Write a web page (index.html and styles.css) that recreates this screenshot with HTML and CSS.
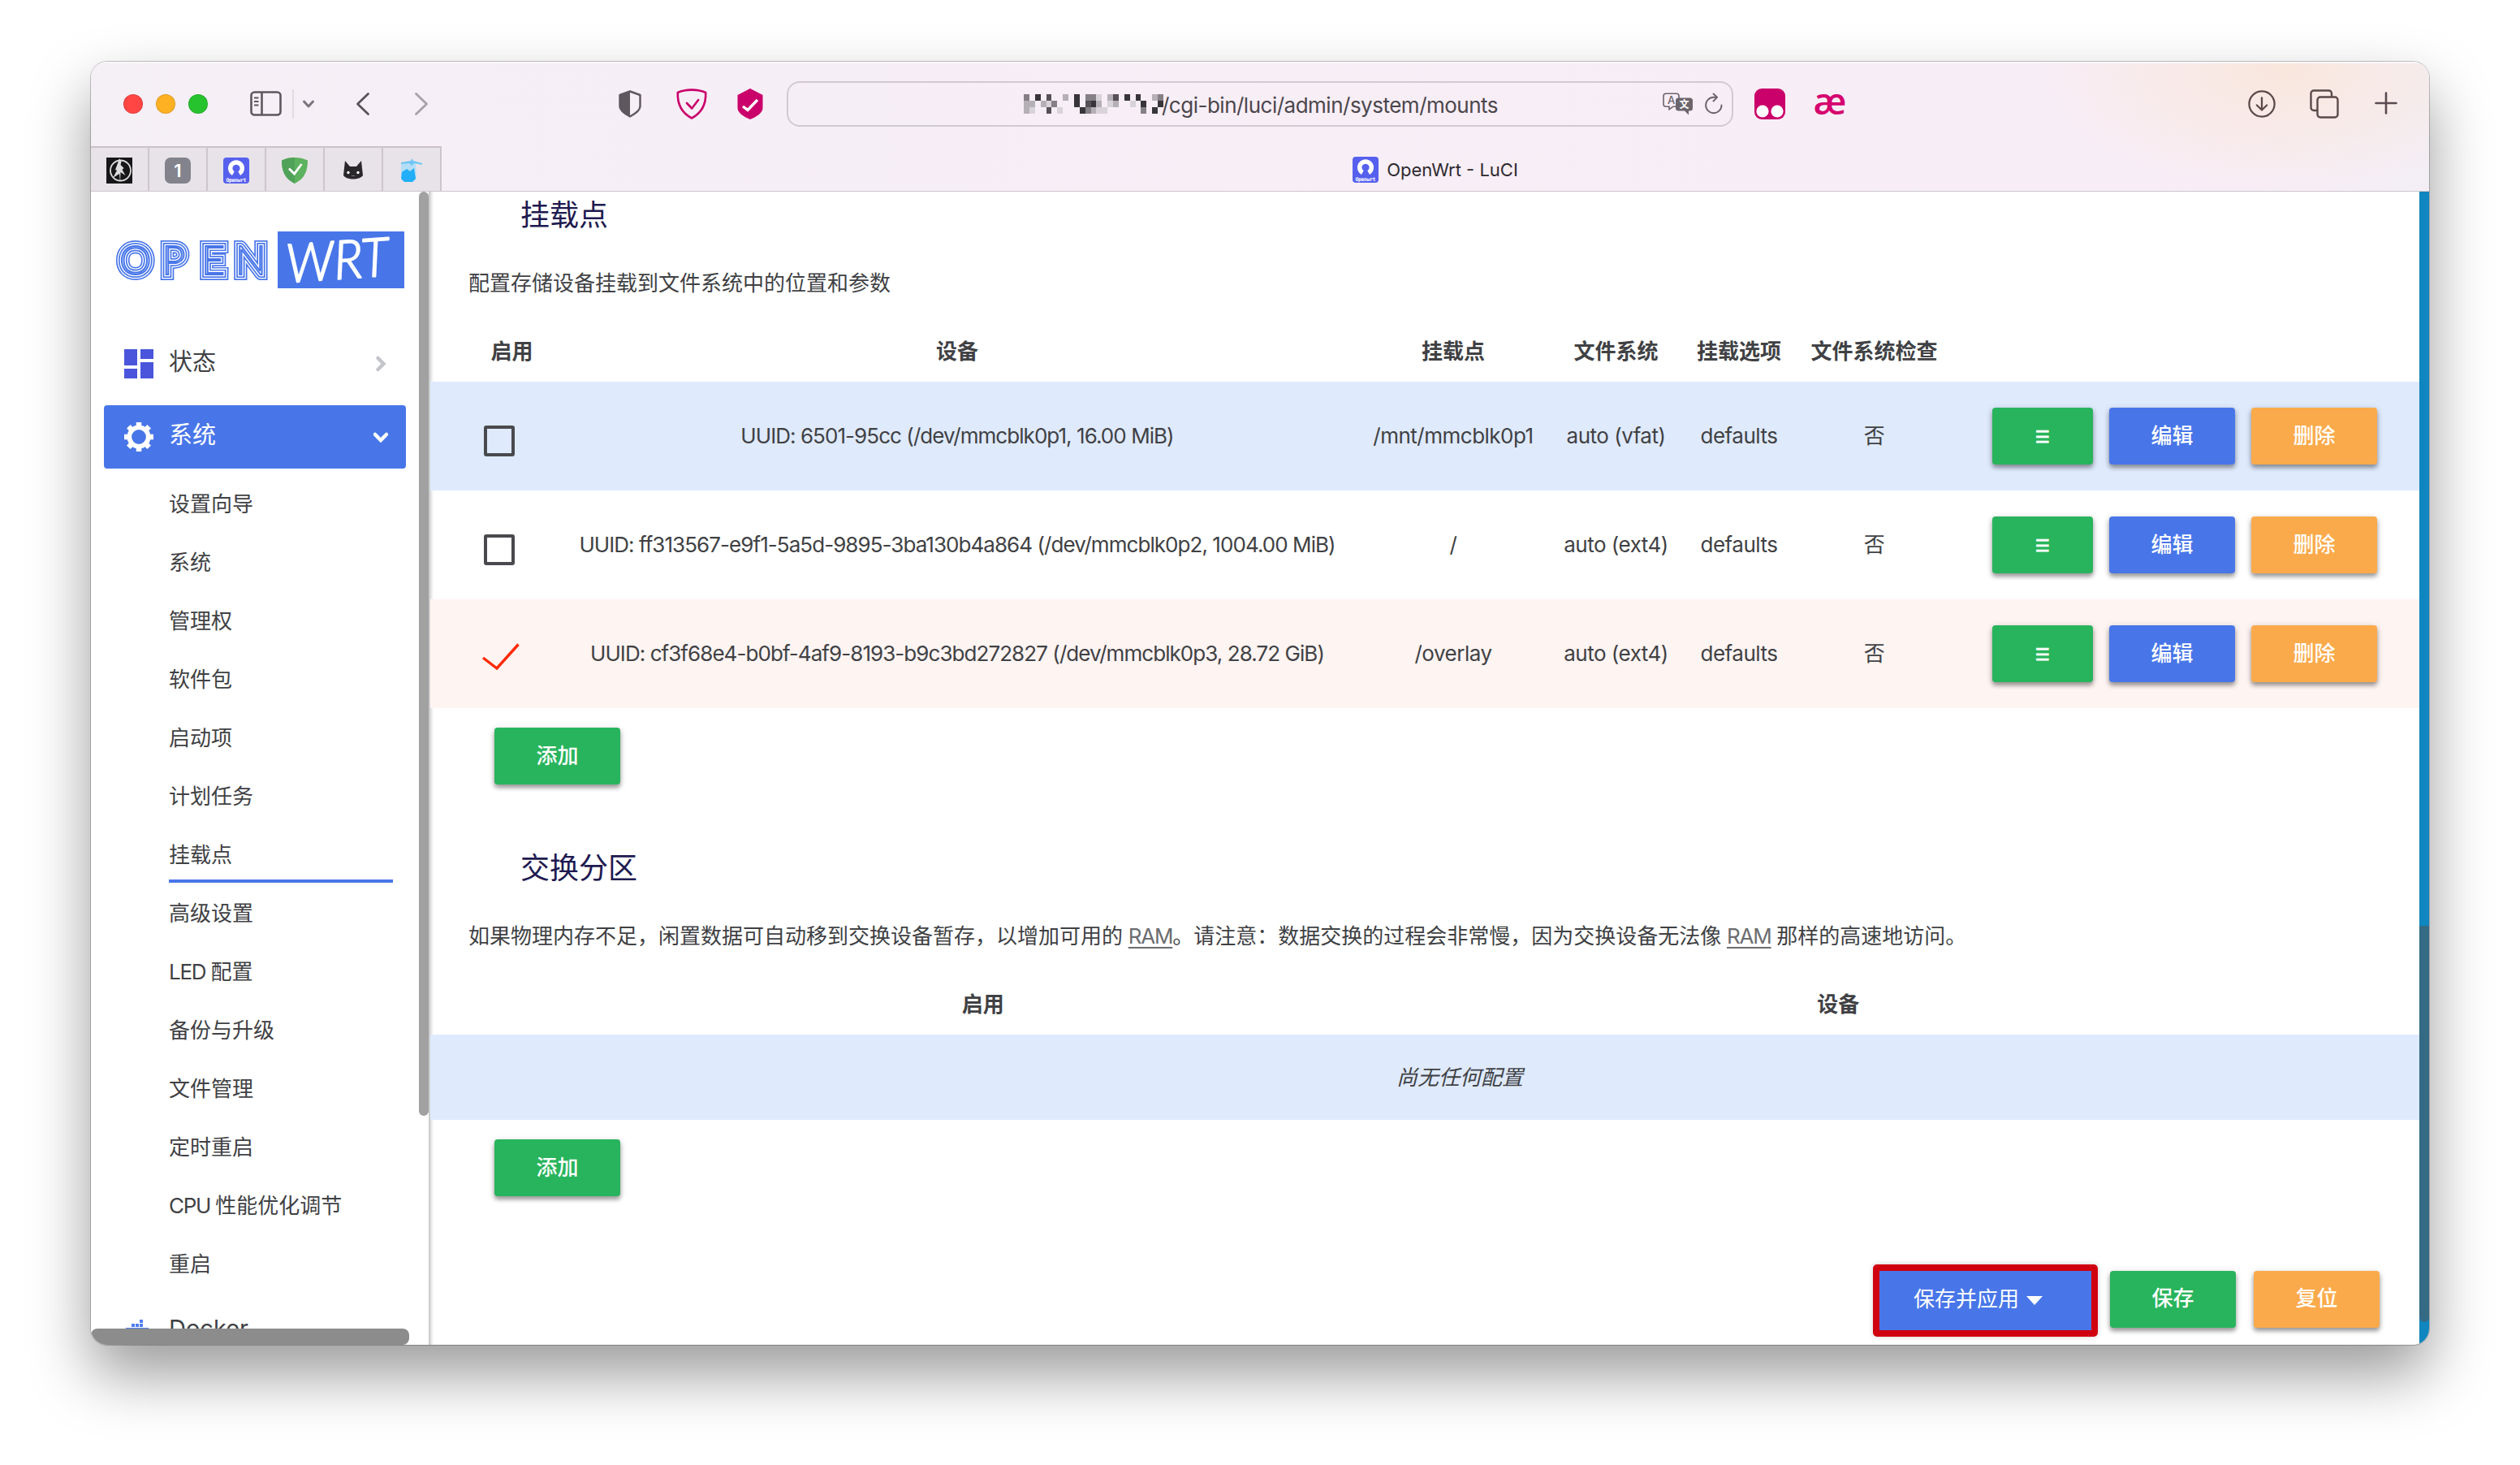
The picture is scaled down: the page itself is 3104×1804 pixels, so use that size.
FILE: index.html
```
<!DOCTYPE html>
<html lang="zh">
<head>
    <meta charset="UTF-8">
    <meta name="viewport" content="width=device-width, initial-scale=1.0">
    <title>OpenWrt - LuCI</title>
    <link rel="stylesheet" href="styles.css">
</head>
<body>

<div class="window">
    <header class="toolbar">
        <div class="titlebar">
            <div class="lights"><i class="red"></i><i class="yellow"></i><i class="green"></i></div>
            <svg class="i-sidebar" width="40" height="32" viewBox="0 0 40 32" fill="none" stroke="#5f575e" stroke-width="2.6">
                <rect x="1.5" y="1.5" width="36" height="28" rx="4"/><path d="M14.5 2v27"/><path d="M5 8.500h5.500M5 13h5.500M5 17.500h5.500" stroke-width="1.800"/>
            </svg>
            <span class="sep"></span>
            <svg class="i-down" width="16" height="12" viewBox="0 0 16 12" fill="none" stroke="#7c757b" stroke-width="3" stroke-linecap="round" stroke-linejoin="round"><path d="M2.500 3 8 9l5.500-6"/></svg>
            <svg class="i-back" width="18" height="30" viewBox="0 0 18 30" fill="none" stroke="#5a5259" stroke-width="2.800" stroke-linecap="round" stroke-linejoin="round"><path d="M15.500 2.500 2.500 15l13 12.500"/></svg>
            <svg class="i-forward" width="18" height="30" viewBox="0 0 18 30" fill="none" stroke="#a8a1a8" stroke-width="2.800" stroke-linecap="round" stroke-linejoin="round"><path d="M2.500 2.500 15.500 15l-13 12.500"/></svg>
            <svg class="i-privacy" width="28" height="34" viewBox="0 0 28 34">
                <path d="M14 1.500 26.500 6v14c0 5-6 9-12.500 12.500C7.500 29 1.500 25 1.500 20V6z" fill="none" stroke="#5f575e" stroke-width="2.400" stroke-linejoin="round"/>
                <path d="M14 1.500V32.500C7.500 29 1.500 25 1.500 20V6z" fill="#5f575e"/>
            </svg>
            <svg class="i-adguard" width="38" height="38" viewBox="0 0 38 38" fill="none" stroke="#ca006b" stroke-width="2.600" stroke-linecap="round" stroke-linejoin="round">
                <path d="M19 1.600C13 1.600 6 3 1.800 5c-.6 14 5 25 17.200 31.500C31.200 30 36.800 19 36.200 5 32 3 25 1.600 19 1.600z"/><path d="M13 18l6.200 6.500 8-10.500"/>
            </svg>
            <svg class="i-check" width="32" height="38" viewBox="0 0 32 38">
                <path d="M16 0 31.500 8v16c0 6-8 11-15.500 14C8.500 35 .5 30 .5 24V8z" fill="#ca006b"/><path d="M7 22l6 4.500L25 14" fill="none" stroke="#fff" stroke-width="3.400"/>
            </svg>
            <div class="address">
                <svg class="mosaic" width="172" height="24" viewBox="0 0 25 3" preserveAspectRatio="none" shape-rendering="crispEdges">
                    <path fill="#383539" d="M2 0h1v1h-1zM9 0h1v2h-1zM18 0h1v1h-1zM20 0h1v1h-1zM12 1h1v1h-1zM21 1h1v1h-1zM24 1h1v1h-1zM10 2h1v1h-1zM23 2h1v1h-1z"/>
                    <path fill="#555156" d="M4 0h1v1h-1zM16 0h1v1h-1zM11 1h1v1h-1zM4 2h1v1h-1z"/>
                    <path fill="#857f86" d="M0 0h1v1h-1zM5 1h1v1h-1zM11 0h2v1h-2zM11 2h1v1h-1zM21 2h1v1h-1zM24 0h1v1h-1z"/>
                    <path fill="#b5afb6" d="M0 1h1v2h-1zM1 1h1v1h-1zM3 1h1v1h-1zM7 0h1v1h-1zM13 1h1v1h-1zM15 0h1v1h-1zM16 1h1v1h-1zM12 2h1v1h-1zM23 0h1v1h-1z"/>
                    <path fill="#d8d2d9" d="M1 2h1v1h-1zM4 1h1v1h-1zM13 2h2v1h-2zM13 0h1v1h-1zM15 1h1v1h-1zM6 2h1v1h-1zM19 1h1v1h-1z"/>
                </svg>
                <span class="url">/cgi-bin/luci/admin/system/mounts</span>
                <svg class="i-translate" width="38" height="28" viewBox="0 0 38 28">
                    <path d="M4 1.200h13a3 3 0 0 1 3 3v10a3 3 0 0 1-3 3h-4l-5 3.500v-3.500H4a3 3 0 0 1-3-3v-10a3 3 0 0 1 3-3z" fill="none" stroke="#6b646b" stroke-width="1.600"/>
                    <text x="10.500" y="13.500" text-anchor="middle" class="tr-a">A</text>
                    <path d="M19.500 6.500h14a3.500 3.500 0 0 1 3.500 3.500v9a3.500 3.500 0 0 1-3.500 3.500H32v5l-5-5h-7.500A3.500 3.500 0 0 1 16 19v-9a3.500 3.500 0 0 1 3.500-3.500z" fill="#6b646b"/>
                    <text x="26.500" y="19" text-anchor="middle" class="tr-b">文</text>
                </svg>
                <svg class="i-reload" width="24" height="28" viewBox="0 0 24 28" fill="none" stroke="#6b646b" stroke-width="1.900" stroke-linecap="round" stroke-linejoin="round">
                    <path d="M21.500 15.500a9.700 9.700 0 1 1-9.700-9.700h3.700"/><path d="M11.500 1.500 16 5.800l-4.500 4.700"/>
                </svg>
            </div>
            <svg class="i-monkey" width="38" height="38" viewBox="0 0 38 38"><rect width="38" height="38" rx="9" fill="#ca006b"/><circle cx="10" cy="28" r="7.600" fill="#fff"/><circle cx="28" cy="28" r="7.600" fill="#fff"/></svg>
            <span class="ae">æ</span>
            <svg class="i-download" width="34" height="34" viewBox="0 0 34 34" fill="none" stroke="#5b4a49" stroke-width="2.300" stroke-linecap="round" stroke-linejoin="round"><circle cx="17" cy="17" r="15.600"/><path d="M17 9.500v15M10.800 18.500l6.200 6 6.200-6"/></svg>
            <svg class="i-tabs" width="36" height="36" viewBox="0 0 36 36" fill="none" stroke="#5b4a49" stroke-width="2.400"><path d="M9.500 26H5a3.500 3.500 0 0 1-3.500-3.500V5A3.500 3.500 0 0 1 5 1.500h18.500A3.500 3.500 0 0 1 27 5v4"/><rect x="9.500" y="9.500" width="25" height="25" rx="3.500"/></svg>
            <svg class="i-plus" width="28" height="28" viewBox="0 0 28 28" stroke="#5b4a51" stroke-width="2.600" stroke-linecap="round"><path d="M14 1.500v25M1.500 14h25"/></svg>
        </div>
        <div class="tabs">
            <div class="pin">
                <svg width="32" height="32" viewBox="0 0 32 32"><rect width="32" height="32" fill="#17171a"/><circle cx="17.500" cy="16" r="12.500" fill="none" stroke="#ddd" stroke-width="1.800"/><path d="M16 1l2.500 4-1 4 4 4-2 2 4 7-6-4-.5 13-1-11-8 5 5-9-2-1 3-8z" fill="#ddd"/></svg>
            </div>
            <div class="pin"><span class="one">1</span></div>
            <div class="pin">
                <svg width="32" height="32" viewBox="0 0 32 32"><rect width="32" height="32" rx="4" fill="#5560ee"/><path d="M12.300 19.600a7.300 7.300 0 1 1 7.400 0" fill="none" stroke="#fff" stroke-width="5.400"/><text x="16" y="29.500" text-anchor="middle" textLength="25" class="favicon-text">Openwrt</text></svg>
            </div>
            <div class="pin">
                <svg width="32" height="32" viewBox="0 0 32 32"><path d="M16 0C11 0 5 1 0 3.500 0 17 4 26 16 32 28 26 32 17 32 3.500 27 1 21 0 16 0z" fill="#5cb25e"/><path d="M16 0C11 0 5 1 0 3.500 0 17 4 26 16 32z" fill="#50a258"/><path d="M9 13.500l6.500 6.500L24.500 8" fill="none" stroke="#fff" stroke-width="2.800"/></svg>
            </div>
            <div class="pin">
                <svg width="26" height="24" viewBox="0 0 26 24"><path d="M3 0l6 7h8l6-7 2 18c-4 6-20 6-24 0z" fill="#29272a"/><circle cx="7" cy="14.500" r="1.700" fill="#fff"/><circle cx="19" cy="14.500" r="1.700" fill="#fff"/><path d="M11 18.500h4" stroke="#777" stroke-width="1.200"/></svg>
            </div>
            <div class="pin">
                <svg width="28" height="30" viewBox="0 0 28 30"><path d="M1 6h18l1 19-4 4H5l-4-5z" fill="#b4def7"/><path d="M2 17l6-4 4 3 5-4 2 13-4 4H5l-4-4z" fill="#22aef8"/><path d="M1 5l12-2 1-3 2 3 11 3v2l-10-2-3 3-3-3-10 1z" fill="#6fc6f5"/></svg>
            </div>
            <div class="tab-active">
                <svg width="32" height="32" viewBox="0 0 32 32"><rect width="32" height="32" rx="4" fill="#5560ee"/><path d="M12.300 19.600a7.300 7.300 0 1 1 7.400 0" fill="none" stroke="#fff" stroke-width="5.400"/><text x="16" y="29.500" text-anchor="middle" textLength="25" class="favicon-text">Openwrt</text></svg>
                <span>OpenWrt - LuCI</span>
            </div>
        </div>
    </header>

    <div class="page">
        <aside class="sidebar">
            <div class="logo">
                <svg width="192" height="52" viewBox="0 0 192 52" class="logo-open">
                    <text id="open-word" y="44" x="5 57.500 106 148">OPEN</text>
                    <use href="#open-word" class="l1"/>
                    <use href="#open-word" class="l2"/>
                    <use href="#open-word" class="l3"/>
                    <use href="#open-word" class="l4"/>
                    <use href="#open-word" class="l5"/>
                </svg>
                <svg width="156" height="70" viewBox="0 0 156 70" class="logo-wrt"><text x="12" y="63" textLength="126" lengthAdjust="spacingAndGlyphs" transform="rotate(-4 12 63)">WRT</text></svg>
            </div>
            <nav class="menu">
                <a class="item">
                    <svg width="36" height="36" viewBox="0 0 36 36" fill="#4a55dc"><path d="M0 0h16v20H0zM20 0h16v12H20zM0 24h16v12H0zM20 16h16v20H20z"/></svg>
                    <span>状态</span>
                    <svg class="arrow" width="20" height="20" viewBox="0 0 20 20" fill="none" stroke="#c3c5ca" stroke-width="4.500" stroke-linecap="round"><path d="M6.500 3 13.500 10l-7 7"/></svg>
                </a>
                <a class="item open">
                    <svg width="36" height="36" viewBox="0 0 36 36"><circle cx="18" cy="18" r="11.700" fill="none" stroke="#fff" stroke-width="5.600"/><path d="M18 0v5M18 31v5M0 18h5M31 18h5M5.300 5.300l3.500 3.500M27.200 27.200l3.500 3.500M5.300 30.700l3.500-3.500M27.200 8.800l3.500-3.500" stroke="#fff" stroke-width="6.500"/></svg>
                    <span>系统</span>
                    <svg class="arrow" width="20" height="20" viewBox="0 0 20 20" fill="none" stroke="#fff" stroke-width="4.500" stroke-linecap="round"><path d="M3 7l7 7 7-7"/></svg>
                </a>
                <ul class="submenu">
                    <li>设置向导</li>
                    <li>系统</li>
                    <li>管理权</li>
                    <li>软件包</li>
                    <li>启动项</li>
                    <li>计划任务</li>
                    <li class="active">挂载点</li>
                    <li>高级设置</li>
                    <li><span class="latin">LED</span> 配置</li>
                    <li>备份与升级</li>
                    <li>文件管理</li>
                    <li>定时重启</li>
                    <li><span class="latin">CPU</span> 性能优化调节</li>
                    <li>重启</li>
                </ul>
                <a class="item docker">
                    <svg width="36" height="36" viewBox="0 0 36 36" fill="#4f7df0"><path d="M9 8h4v4H9zM14 8h4v4h-4zM19 8h4v4h-4zM19 3h4v4h-4zM2 13h28v10H2z"/></svg>
                    <span>Docker</span>
                </a>
            </nav>
            <i class="scroll-v"></i>
            <i class="scroll-h"></i>
        </aside>

        <main class="content">
            <h3>挂载点</h3>
            <p class="descr">配置存储设备挂载到文件系统中的位置和参数</p>
            <div class="mounts">
                <div class="row head"><b>启用</b><b>设备</b><b>挂载点</b><b>文件系统</b><b>挂载选项</b><b>文件系统检查</b></div>
                <div class="row blue">
                    <span class="cell-check"><i class="checkbox"></i></span>
                    <span class="device">UUID: 6501-95cc (/dev/mmcblk0p1, 16.00 MiB)</span><span>/mnt/mmcblk0p1</span><span>auto (vfat)</span><span>defaults</span><span class="check">否</span>
                    <div class="actions"><button class="btn green drag">☰</button><button class="btn primary">编辑</button><button class="btn orange">删除</button></div>
                </div>
                <div class="row">
                    <span class="cell-check"><i class="checkbox"></i></span>
                    <span class="device">UUID: ff313567-e9f1-5a5d-9895-3ba130b4a864 (/dev/mmcblk0p2, 1004.00 MiB)</span><span>/</span><span>auto (ext4)</span><span>defaults</span><span class="check">否</span>
                    <div class="actions"><button class="btn green drag">☰</button><button class="btn primary">编辑</button><button class="btn orange">删除</button></div>
                </div>
                <div class="row pink">
                    <span class="cell-check"><svg class="tick" width="46" height="34" viewBox="0 0 46 34" fill="none" stroke="#ff2a05" stroke-width="3.400"><path d="M1 18l17 13L44.500 1.500"/></svg></span>
                    <span class="device">UUID: cf3f68e4-b0bf-4af9-8193-b9c3bd272827 (/dev/mmcblk0p3, 28.72 GiB)</span><span>/overlay</span><span>auto (ext4)</span><span>defaults</span><span class="check">否</span>
                    <div class="actions"><button class="btn green drag">☰</button><button class="btn primary">编辑</button><button class="btn orange">删除</button></div>
                </div>
            </div>
            <button class="btn green add">添加</button>

            <h3 class="second">交换分区</h3>
            <p class="descr">如果物理内存不足，闲置数据可自动移到交换设备暂存，以增加可用的 <abbr>RAM</abbr>。请注意：数据交换的过程会非常慢，因为交换设备无法像 <abbr>RAM</abbr> 那样的高速地访问。</p>
            <div class="swap">
                <div class="swap-head"><b>启用</b><b>设备</b></div>
                <div class="swap-empty"><em>尚无任何配置</em></div>
            </div>
            <button class="btn green add">添加</button>

            <div class="page-actions">
                <button class="apply">保存并应用<svg width="20" height="11" viewBox="0 0 20 11"><path d="M0 0h20L10 11z" fill="#fff"/></svg></button>
                <button class="btn green">保存</button>
                <button class="btn orange">复位</button>
            </div>
        </main>
        <div class="page-scroll"><i></i></div>
    </div>
</div>

</body>
</html>
```
FILE: styles.css
```
* {
    box-sizing: border-box;
}

body {
    margin: 0;
    padding: 76px 112px;
    height: 1804px;
    overflow: hidden;
    background: #fff;
    color: #404144;
    font-family: "Inter", "Noto Sans CJK SC", sans-serif;
    font-size: 26px;
}

svg {
    display: block;
    flex: none;
    overflow: visible;
}

.window {
    width: 2880px;
    height: 1580px;
    border-radius: 20px;
    overflow: hidden;
    background: #fff;
    box-shadow: 0 0 0 1px rgba(0, 0, 0, 0.22), 0 36px 76px rgba(0, 0, 0, 0.4);
}

/* 浏览器工具栏 */
.toolbar {
    height: 160px;
    background: radial-gradient(ellipse 300px 150px at 2700px 10px, #f9e7dd, rgba(249, 231, 221, 0)), linear-gradient(90deg, #f5eff6, #f7eef6 50%, #f8edf6 92%, #f3eef5);
    border-bottom: 1px solid #cdc7cd;
    box-shadow: inset 0 2px 0 #fbf8fb;
}

.titlebar {
    height: 104px;
    display: flex;
    align-items: center;
}

.lights {
    display: flex;
    gap: 16px;
    margin-left: 40px;
}

.lights i {
    width: 24px;
    height: 24px;
    border-radius: 50%;
    border: 1px solid rgba(0, 0, 0, 0.12);
}

.red { background: #ff4644; }
.yellow { background: #ffb124; }
.green { background: #28b45c; }
.lights .green { background: #27c32f; }

.i-sidebar { margin-left: 52px; }

.sep {
    width: 2px;
    height: 36px;
    margin-left: 12px;
    background: #e2dce2;
}

.i-down { margin-left: 10px; }
.i-back { margin-left: 50px; }
.i-forward { margin-left: 54px; }
.i-privacy { margin-left: 234px; }
.i-adguard { margin-left: 43px; }
.i-check { margin-left: 37px; }

.address {
    display: flex;
    align-items: center;
    width: 1166px;
    height: 56px;
    margin-left: 29px;
    padding-left: 290px;
    border: 2px solid #d2cad2;
    border-radius: 16px;
    color: #4c464c;
}

.url {
    width: 416px;
    padding-top: 3px;
    margin-left: -2px;
    font-size: 26px;
    letter-spacing: -0.5px;
    white-space: nowrap;
}

.i-translate { margin-left: 201px; }
.i-reload { margin-left: 13px; }
.i-monkey { margin-left: 26px; }

.tr-a {
    font: 500 13px "Inter", sans-serif;
    fill: #6b646b;
}

.tr-b {
    font: bold 12px "Noto Sans CJK SC", sans-serif;
    fill: #fff;
}

.favicon-text {
    font: bold 6.5px "DejaVu Sans Mono", monospace;
    fill: #fff;
}

.ae {
    width: 38px;
    margin-left: 36px;
    color: #d5006e;
    font: 600 46px/46px "Open Sans", sans-serif;
    display: flex;
    justify-content: center;
    padding-bottom: 10px;
}

.i-download { margin-left: 496px; }
.i-tabs { margin-left: 42px; }
.i-plus { margin-left: 44px; margin-top: -2px; }

.tabs {
    display: flex;
    height: 55px;
}

.pin {
    width: 72px;
    display: flex;
    align-items: center;
    justify-content: center;
    padding-top: 2px;
    background: #e8e3e8;
    border-top: 2px solid #c9c3c9;
    border-right: 2px solid #cdc7cd;
}

.one {
    width: 32px;
    height: 32px;
    border-radius: 7px;
    background: #83838d;
    color: #fff;
    font: 600 22px/32px "Inter", sans-serif;
    text-align: center;
}

.tab-active {
    flex: 1;
    display: flex;
    align-items: center;
    justify-content: center;
    gap: 10px;
    padding-top: 3px;
    color: #2f2a2f;
    font-size: 22px;
}

/* 页面 */
.page {
    height: 1420px;
    display: flex;
}

.sidebar {
    position: relative;
    z-index: 1;
    width: 416px;
    overflow: hidden;
    background: #fff;
}

.logo {
    display: flex;
    align-items: center;
    gap: 8px;
    padding: 49px 0 0 30px;
}

/* 多层描边叠加出条纹字 */
.logo-open {
    fill: none;
    font: 300 50px "Lato", sans-serif;
    stroke-miterlimit: 1.6;
}

.logo-open .l1 { stroke: #4876e9; stroke-width: 14; }
.logo-open .l2 { stroke: #fff; stroke-width: 10.6; }
.logo-open .l3 { stroke: #4876e9; stroke-width: 8; }
.logo-open .l4 { stroke: #fff; stroke-width: 4.6; }
.logo-open .l5 { stroke: #4876e9; stroke-width: 2; }

.logo-wrt {
    background: #4876e9;
}

.logo-wrt text {
    font: italic 300 66px "Lato", sans-serif;
    fill: #fff;
    stroke: #fff;
    stroke-width: 2;
    stroke-linejoin: round;
}

.menu {
    padding: 54px 28px 0 16px;
}

.item {
    display: flex;
    align-items: center;
    height: 78px;
    padding: 0 21px 0 25px;
    border-radius: 4px;
    font-size: 29px;
}

.item span {
    flex: 1;
    margin-left: 19px;
    padding-bottom: 10px;
}

.item.open {
    margin-top: 12px;
    background: #4876e9;
    color: #fff;
}

.submenu {
    list-style: none;
    margin: 7px 0 0;
    padding: 0 16px 0 80px;
}

.submenu li {
    height: 72px;
    line-height: 73px;
    white-space: nowrap;
}

.submenu .latin {
    letter-spacing: -1.3px;
    margin-right: -1px;
}

.submenu .active {
    background: linear-gradient(#4876e9, #4876e9) 0 67px / 100% 4px no-repeat;
}

.item.docker {
    margin-top: 9px;
}

.scroll-v {
    position: absolute;
    top: 0;
    right: 0;
    width: 12px;
    height: 1138px;
    border-radius: 6px;
    background: #a1a1a1;
}

.scroll-h {
    position: absolute;
    left: 0;
    bottom: 0;
    width: 392px;
    height: 20px;
    border-radius: 8px;
    background: #8c8c8c;
}

.content {
    width: 2452px;
    padding-left: 2px;
    box-shadow: inset 5px 0 5px -3px rgba(0, 0, 0, 0.3);
}

h3 {
    height: 57px;
    margin: 0;
    padding-left: 111px;
    color: #1e1a50;
    font-size: 36px;
    font-weight: 400;
    line-height: 58px;
}

h3.second {
    margin-top: 74px;
}

.descr {
    height: 111px;
    margin: 0;
    padding-left: 47px;
    line-height: 112px;
    white-space: nowrap;
    word-spacing: -0.6px;
}

abbr {
    color: #6c6d70;
    letter-spacing: -1.2px;
    text-decoration: underline;
    text-decoration-thickness: 2px;
    text-underline-offset: 4px;
}

.row {
    display: grid;
    grid-template-columns: 160px 978px 244px 157px 146px 187px 578px;
    align-items: center;
    justify-items: center;
    height: 134px;
    white-space: nowrap;
}

.row > span {
    padding-bottom: 2px;
    letter-spacing: -0.5px;
}

.row > .device {
    letter-spacing: -0.94px;
}

.row > .check {
    padding-bottom: 5px;
}

.row.head {
    height: 66px;
    padding-bottom: 13px;
}

.row.head b:first-child {
    margin-left: 41px;
}

.row.blue,
.swap-empty {
    background: #dfeafd;
}

.row.pink {
    background: #fef4f2;
}

.row > .cell-check {
    justify-self: start;
    padding: 12px 0 0 64px;
}

.checkbox {
    display: block;
    width: 38px;
    height: 38px;
    margin-left: 2px;
    border: 4px solid #484a4d;
    border-radius: 3px;
}

.tick {
    margin-top: -4px;
}

.actions {
    justify-self: start;
    display: flex;
    gap: 20px;
    padding-left: 52px;
}

button {
    margin: 0;
    padding: 0;
    border: none;
    color: #fff;
    font-family: inherit;
    font-size: 26px;
}

.btn {
    width: 155px;
    height: 70px;
    padding-bottom: 5px;
    border-radius: 4px;
    font-weight: 500;
    box-shadow: 0 4px 5px rgba(0, 0, 0, 0.3), 0 2px 8px rgba(0, 0, 0, 0.2);
}

.primary { background: #4876e9; }
.orange { background: #fbaa4b; }

.drag {
    width: 124px;
    padding: 2px 0 0;
    font: 20px "DejaVu Sans", sans-serif;
    -webkit-text-stroke: 0.8px #fff;
}

.add {
    display: block;
    margin: 24px 0 0 79px;
}

.swap-head {
    display: flex;
    height: 66px;
    padding: 0 189px 9px 154px;
}

.swap-head b {
    flex: 1;
    line-height: 57px;
    text-align: center;
}

.swap-empty {
    height: 105px;
    padding-left: 86px;
    line-height: 105px;
    text-align: center;
}

.page-actions {
    display: flex;
    align-items: flex-start;
    justify-content: flex-end;
    margin: 84px 49px 0 0;
}

.page-actions .btn {
    margin-top: 8px;
    padding-bottom: 7px;
}

.apply {
    display: flex;
    align-items: center;
    width: 277px;
    height: 89px;
    margin-right: 15px;
    padding: 0 0 8px 42px;
    border: 8px solid #d0000f;
    border-radius: 5px;
    background: #4876e9;
    box-shadow: 0 0 6px rgba(0, 0, 0, 0.2);
}

.apply svg {
    margin: 8px 0 0 9px;
}

.page-actions .orange {
    margin-left: 22px;
}

.page-scroll {
    width: 12px;
    padding-top: 904px;
    background: #0f86bf;
}

.page-scroll i {
    display: block;
    height: 488px;
    border-radius: 0 0 6px 6px;
    background: #356a85;
}
```
